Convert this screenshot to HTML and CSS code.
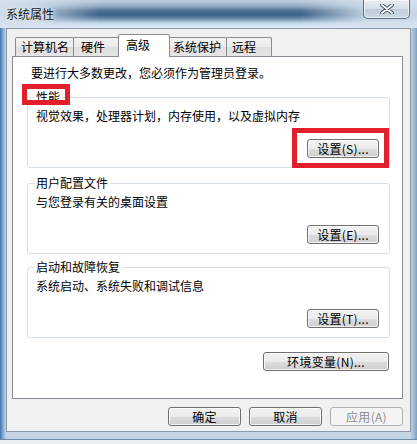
FILE: index.html
```html
<!DOCTYPE html>
<html lang="zh-CN">
<head>
<meta charset="utf-8">
<title>系统属性</title>
<link rel="stylesheet" href="styles.css">
</head>
<body>
<div class="window">
  <div class="titlebar">
    <span class="title">系统属性</span>
    <button class="close" aria-label="关闭">
      <svg width="14" height="10" viewBox="0 0 14 10">
        <path d="M2 1 L12 9 M12 1 L2 9" stroke="#3a4a5c" stroke-width="3.6" stroke-linecap="round"/>
        <path d="M2 1 L12 9 M12 1 L2 9" stroke="#ffffff" stroke-width="1.8" stroke-linecap="round"/>
      </svg>
    </button>
  </div>
  <div class="dialog">
    <div class="tabs">
      <div class="tab">计算机名</div>
      <div class="tab">硬件</div>
      <div class="tab active">高级</div>
      <div class="tab">系统保护</div>
      <div class="tab">远程</div>
    </div>
    <div class="panel">
      <p class="intro">要进行大多数更改，您必须作为管理员登录。</p>
      <div class="group">
        <span class="group-title">性能</span>
        <p class="desc">视觉效果，处理器计划，内存使用，以及虚拟内存</p>
        <div class="actions"><button class="btn">设置(S)...</button></div>
      </div>
      <div class="group g2">
        <span class="group-title">用户配置文件</span>
        <p class="desc">与您登录有关的桌面设置</p>
        <div class="actions"><button class="btn">设置(E)...</button></div>
      </div>
      <div class="group g3">
        <span class="group-title">启动和故障恢复</span>
        <p class="desc">系统启动、系统失败和调试信息</p>
        <div class="actions"><button class="btn">设置(T)...</button></div>
      </div>
      <div class="env-row"><button class="btn btn-wide">环境变量(N)...</button></div>
    </div>
    <div class="footer">
      <button class="btn btn-foot">确定</button>
      <button class="btn btn-foot">取消</button>
      <button class="btn btn-foot" disabled>应用(A)</button>
    </div>
  </div>
</div>
<div class="mark mark-title"></div>
<div class="mark mark-button"></div>
</body>
</html>
```
FILE: styles.css
```css
* { box-sizing: border-box; }
html, body { margin: 0; padding: 0; }
body {
  width: 417px;
  height: 444px;
  overflow: hidden;
  position: relative;
  background: #e9eef3;
  font-family: "Noto Sans CJK SC", "Noto Sans", sans-serif;
  font-size: 12px;
  color: #000;
}
p { margin: 0; }

.window {
  width: 417px;
  height: 440px;
  display: flex;
  flex-direction: column;
  background:
    linear-gradient(90deg, #3d76b0 0, #86aacd 3px, #c3d5e6 6px, #c3d5e6 calc(100% - 7px), #9fbbd5 calc(100% - 3px), #7aa0c6 100%);
  border-bottom: 1px solid #6f8aa6;
}

.titlebar {
  height: 28px;
  flex: none;
  display: flex;
  align-items: flex-start;
  justify-content: space-between;
  background:
    linear-gradient(90deg, rgba(214,226,238,0.95) 0, rgba(214,226,238,0.7) 10%, rgba(214,226,238,0) 24%, rgba(214,226,238,0) 72%, rgba(214,226,238,0.85) 88%, rgba(214,226,238,0.9) 100%),
    linear-gradient(180deg, #c2d0de 0, #93abc2 6px, #4a6e92 11px, #3d6288 15px, #6f8fae 19px, #c2d6e8 23px, #e6f0f8 28px);
}
.title {
  padding: 7px 0 0 6px;
  line-height: 14px;
  color: #101820;
  text-shadow: 0 0 6px rgba(255,255,255,0.9), 0 0 3px rgba(255,255,255,0.9);
}
.close {
  width: 47px;
  height: 19px;
  margin-right: 7px;
  padding: 0;
  display: flex;
  align-items: center;
  justify-content: center;
  border: 1px solid #5a6e84;
  border-top: none;
  border-radius: 0 0 5px 5px;
  background: linear-gradient(180deg, #e9eef4 0, #d4dee8 50%, #c0cedb 51%, #cad7e3 100%);
  box-shadow: inset 0 0 0 1px rgba(255,255,255,0.6);
}

.dialog {
  flex: 1;
  margin: 0 6px 7px 6px;
  background: #f0f0f0;
  border: 1px solid #8c98a5;
  display: flex;
  flex-direction: column;
}

.tabs {
  display: flex;
  align-items: flex-end;
  height: 22px;
  margin: 5px 0 0 8px;
  position: relative;
  z-index: 1;
}
.tab {
  height: 19px;
  line-height: 17px;
  padding: 0 0 0 5px;
  border: 1px solid #898c95;
  border-bottom: none;
  border-radius: 2px 2px 0 0;
  margin-right: -1px;
  background: linear-gradient(180deg, #f3f3f3 0, #ebebeb 50%, #dedede 51%, #e6e6e6 100%);
  white-space: nowrap;
}
.tab:nth-child(1) { width: 59px; }
.tab:nth-child(2) { width: 48px; padding-left: 7px; }
.tab:nth-child(4) { width: 59px; padding-left: 4px; }
.tab:nth-child(5) { width: 46px; }
.tab.active {
  width: 52px;
  height: 23px;
  margin: 0 -1px -1px -2px;
  padding-left: 7px;
  line-height: 19px;
  background: #fff;
  position: relative;
  z-index: 2;
}
.tab.active + .tab { margin-left: -1px; }

.panel {
  height: 343px;
  flex: none;
  margin: 0 7px 0 5px;
  background: #fff;
  border: 1px solid #898c95;
  padding: 9px 12px 0 14px;
}
.intro {
  line-height: 14px;
  padding-left: 4px;
}

.group {
  position: relative;
  height: 71px;
  margin-top: 17px;
  border: 1px solid #d5dfe5;
  border-radius: 3px;
  padding: 11px 10px 0 8px;
}
.group.g2 { margin-top: 15px; }
.group.g3 { margin-top: 13px; }
.group-title {
  position: absolute;
  top: -8px;
  left: 6px;
  padding: 0 2px;
  line-height: 14px;
  background: #fff;
}
.desc { line-height: 14px; }
.actions {
  display: flex;
  justify-content: flex-end;
  margin-top: 16px;
}

.btn {
  font: inherit;
  font-size: 12px;
  color: #000;
  height: 19px;
  padding: 0;
  line-height: 15px;
  border: 1px solid #707070;
  border-radius: 3px;
  background: linear-gradient(180deg, #f2f2f2 0, #ebebeb 50%, #dddddd 51%, #cfcfcf 100%);
  box-shadow: inset 0 0 0 1px rgba(255,255,255,0.75);
  width: 72px;
  letter-spacing: 0.3px;
}
.btn-wide { width: 126px; }
.env-row {
  display: flex;
  justify-content: flex-end;
  margin-top: 14px;
  padding-right: 1px;
}

.footer {
  display: flex;
  justify-content: flex-end;
  gap: 8px;
  margin-top: 8px;
  padding-right: 7px;
}
.btn-foot { width: 73px; }
.btn:disabled {
  color: #8d8d8d;
  border-color: #adb2b5;
  background: #f4f4f4;
  box-shadow: none;
}

.mark {
  position: absolute;
  border: 5px solid #e2202b;
}
.mark-title {
  left: 22px;
  top: 84px;
  width: 48px;
  height: 21px;
}
.mark-button {
  left: 292px;
  top: 128px;
  width: 97px;
  height: 40px;
}
```
